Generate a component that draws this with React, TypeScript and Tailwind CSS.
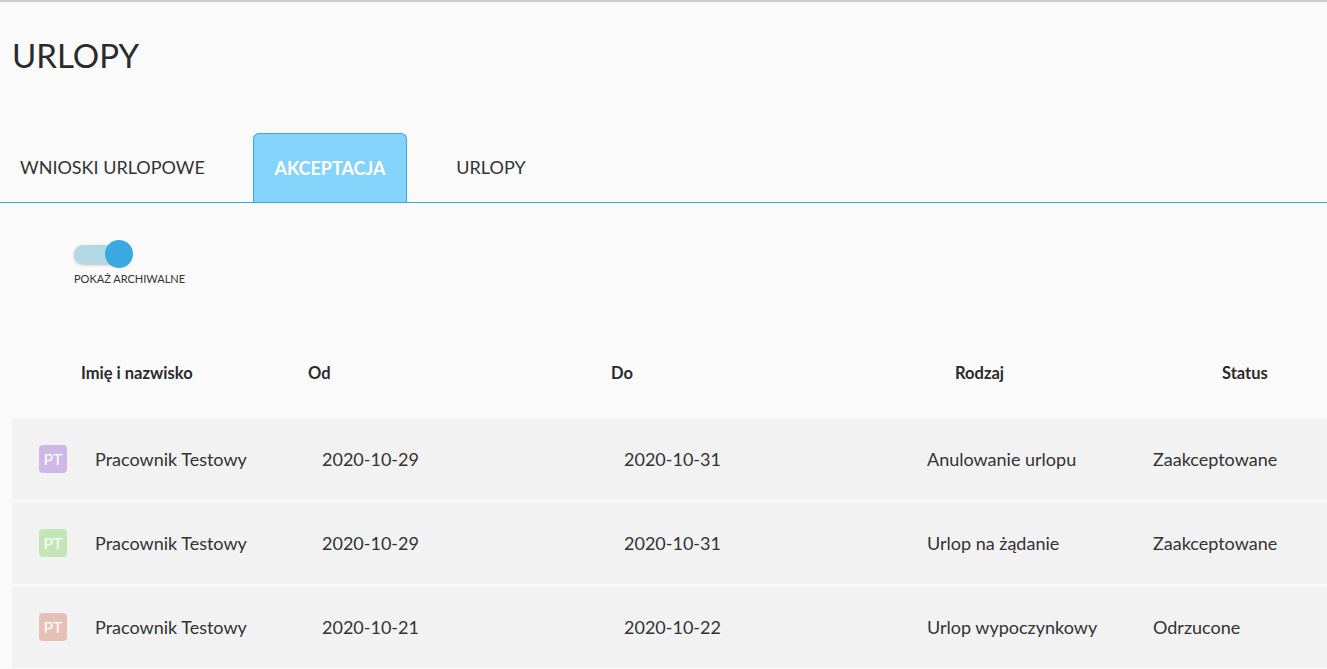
import React from "react";

const rows = [
  { color: "bg-[#cdb8e6]", name: "Pracownik Testowy", od: "2020-10-29", do: "2020-10-31", rodzaj: "Anulowanie urlopu", status: "Zaakceptowane" },
  { color: "bg-[#c3e6b8]", name: "Pracownik Testowy", od: "2020-10-29", do: "2020-10-31", rodzaj: "Urlop na żądanie", status: "Zaakceptowane" },
  { color: "bg-[#e6c0b6]", name: "Pracownik Testowy", od: "2020-10-21", do: "2020-10-22", rodzaj: "Urlop wypoczynkowy", status: "Odrzucone" },
];

export default function App() {
  return (
    <div className="w-[1327px] h-[669px] overflow-hidden bg-[#fafafa] border-t-2 border-[#cccccc] text-[#333333] font-['Lato',sans-serif]">
      <h1 className="pl-[12px] pt-[33px] text-[33px] leading-[40px] font-normal text-[#2b2b2b]">URLOPY</h1>

      <div className="mt-[58px] flex items-end h-[70px] border-b border-[#3aa6dc]">
        <div className="w-[253px] h-full flex items-center pl-[20px] text-[18px] text-[#333]">WNIOSKI URLOPOWE</div>
        <div className="w-[154px] h-full flex items-center justify-center bg-[#83d3fa] border border-b-0 border-[#3aa6dc] rounded-t-[6px] text-[18px] font-bold text-white">AKCEPTACJA</div>
        <div className="w-[168px] h-full flex items-center justify-center text-[18px] text-[#333]">URLOPY</div>
      </div>

      <div className="pl-[74px] pt-[37px] flex flex-col items-start">
        <div className="relative w-[58px] h-[28px] flex items-center">
          <div className="w-[54px] h-[19px] rounded-full bg-[#b3d8e5] shadow-[0_1px_3px_rgba(0,0,0,0.25)]" />
          <div className="absolute left-[31px] top-[0px] w-[28px] h-[28px] rounded-full bg-[#3aa9e2]" />
        </div>
        <div className="mt-[4px] text-[11px] leading-[13px] text-[#333]">POKAŻ ARCHIWALNE</div>
      </div>

      <div className="mt-[66px] flex h-[44px] items-center pl-[12px] text-[16.5px] font-bold text-[#2b2b2b]">
        <div className="w-[296px] pl-[69px]">Imię i nazwisko</div>
        <div className="w-[303px]">Od</div>
        <div className="w-[344px]">Do</div>
        <div className="w-[267px]">Rodzaj</div>
        <div>Status</div>
      </div>

      <div className="mt-[23px] ml-[12px] flex flex-col gap-[2px]">
        {rows.map((r, i) => (
          <div key={i} className="flex items-center h-[82px] bg-[#f2f2f2] text-[18px] text-[#333]">
            <div className="w-[298px] flex items-center pl-[27px]">
              <div className={`w-[28px] h-[28px] rounded-[4px] ${r.color} flex items-center justify-center text-[16px] text-white`}>PT</div>
              <div className="ml-[28px]">{r.name}</div>
            </div>
            <div className="w-[302px] pl-[12px]">{r.od}</div>
            <div className="w-[303px] pl-[12px]">{r.do}</div>
            <div className="w-[226px] pl-[12px]">{r.rodzaj}</div>
            <div className="pl-[12px]">{r.status}</div>
          </div>
        ))}
      </div>
    </div>
  );
}
